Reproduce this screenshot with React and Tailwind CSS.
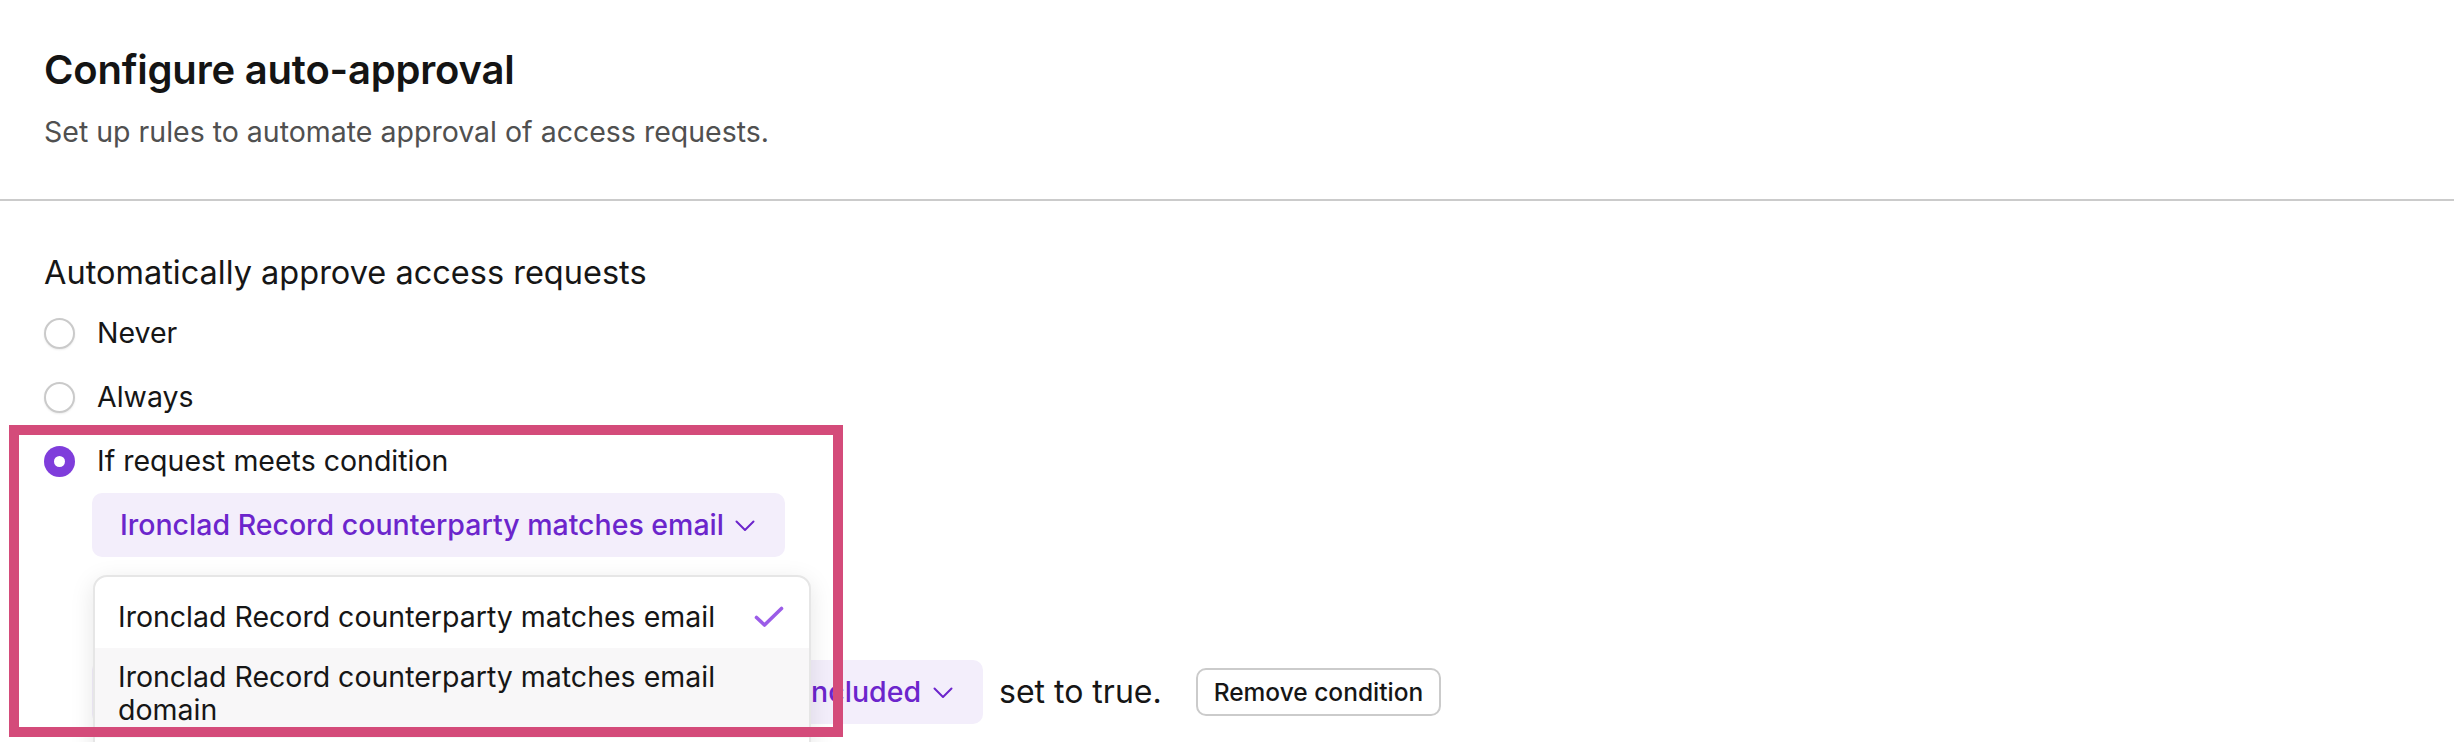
import React from "react";

function Chevron({ className = "" }) {
  return (
    <svg className={className} width="20" height="12" viewBox="0 0 20 12" fill="none">
      <path d="M1.5 1.5L10 10L18.5 1.5" stroke="currentColor" strokeWidth="2" strokeLinecap="round" strokeLinejoin="round" />
    </svg>
  );
}

function Check() {
  return (
    <svg width="30" height="22" viewBox="0 0 30 22" fill="none">
      <path d="M2.5 11.5L10.5 19L27.5 2.5" stroke="#9b5ce8" strokeWidth="3.6" strokeLinecap="round" strokeLinejoin="round" />
    </svg>
  );
}

function Radio({ checked, label }) {
  return (
    <div className="flex h-[64px] items-center gap-[22px]">
      {checked ? (
        <div className="flex h-[31px] w-[31px] items-center justify-center rounded-full bg-[#7f3ddb]">
          <div className="h-[11px] w-[11px] rounded-full bg-white" />
        </div>
      ) : (
        <div className="h-[31px] w-[31px] rounded-full border-2 border-[#cacaca] bg-white shadow-[0_1px_2px_rgba(0,0,0,0.08)]" />
      )}
      <span className="text-[28.5px] leading-[40px] text-[#161616]">{label}</span>
    </div>
  );
}

export default function App() {
  return (
    <div className="relative h-[742px] overflow-hidden bg-white font-['Inter','Liberation_Sans',sans-serif]">
      <header className="border-b-2 border-[#cbcbcb] px-[44px] pb-[49px] pt-[46px]">
        <h1 className="text-[40px] font-semibold leading-[48px] tracking-[-0.2px] text-[#141414]">
          Configure auto-approval
        </h1>
        <p className="mt-[20px] text-[28.5px] leading-[36px] text-[#505050]">
          Set up rules to automate approval of access requests.
        </p>
      </header>

      <section className="px-[44px]">
        <h2 className="mt-[52px] text-[32.5px] leading-[40px] text-[#161616]">
          Automatically approve access requests
        </h2>
        <div className="mt-[8px] flex flex-col">
          <Radio label="Never" />
          <Radio label="Always" />
          <Radio checked label="If request meets condition" />
        </div>

        <div className="ml-[48px] flex flex-col items-start">
          <button className="flex h-[64px] items-center gap-[11px] rounded-[10px] bg-[#f3eefb] pl-[28px] pr-[30px] text-[28.5px] font-medium leading-[40px] text-[#6c25cc]">
            <span>Ironclad Record counterparty matches email</span>
            <Chevron className="mt-[2px]" />
          </button>

          <div className="mt-[103px] flex items-center">
            <button className="flex h-[64px] w-[891px] items-center justify-end gap-[12px] overflow-hidden whitespace-nowrap rounded-[10px] bg-[#f3eefb] pr-[30px] text-[28.5px] font-medium leading-[40px] text-[#6c25cc]">
              <span>Counterparty email domain is included</span>
              <Chevron className="mt-[2px] shrink-0" />
            </button>
            <span className="ml-[16px] text-[32px] leading-[40px] text-[#161616]">set to true.</span>
            <button className="ml-[34px] flex h-[48px] items-center rounded-[10px] border-2 border-[#cbcbcb] bg-white px-[16px] text-[24.5px] font-medium leading-[32px] text-[#161616]">
              Remove condition
            </button>
          </div>
        </div>
      </section>

      {/* Dropdown menu */}
      <div className="absolute left-[93px] top-[575px] w-[718px] rounded-[14px] border-2 border-[#e6e6e6] bg-white pb-[40px] pt-[8px] shadow-[0_6px_24px_rgba(0,0,0,0.10)]">
        <div className="flex items-center py-[15px] pl-[23px] pr-[25px]">
          <span className="w-[612px] text-[28.5px] leading-[33px] text-[#161616]">
            Ironclad Record counterparty matches email
          </span>
          <span className="ml-auto flex items-center">
            <Check />
          </span>
        </div>
        <div className="flex items-center bg-[#f8f7f8] py-[12px] pl-[23px] pr-[25px]">
          <span className="w-[612px] text-[28.5px] leading-[33px] text-[#161616]">
            Ironclad Record counterparty matches email domain
          </span>
        </div>
      </div>

      {/* Highlight annotation */}
      <div className="pointer-events-none absolute left-[9px] top-[425px] h-[312px] w-[834px] border-[10px] border-[#d44b7a]" />
    </div>
  );
}
